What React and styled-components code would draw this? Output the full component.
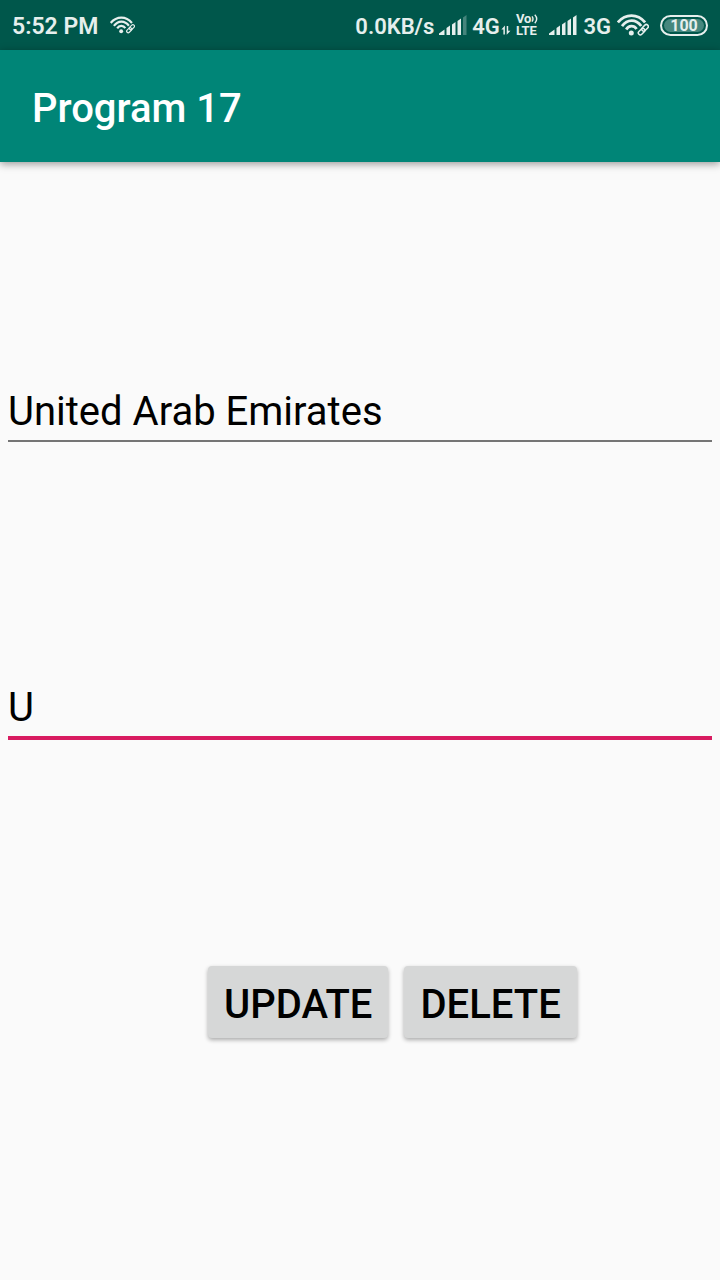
import React from "react";
import styled, { createGlobalStyle } from "styled-components";

const GlobalStyle = createGlobalStyle`
  *, *::before, *::after { box-sizing: border-box; }
  body {
    margin: 0;
    background: #fafafa;
    font-family: Roboto, "Liberation Sans", sans-serif;
  }
`;

const Screen = styled.div`
  min-height: 100vh;
  display: flex;
  flex-direction: column;
  background: #fafafa;
`;

const StatusBar = styled.div`
  display: flex;
  align-items: center;
  justify-content: space-between;
  height: 50px;
  padding: 0 12px;
  background: #00574b;
  color: #e6efed;
`;

const StatusGroup = styled.div`
  display: flex;
  align-items: center;
  gap: ${(p) => p.$gap}px;
`;

const StatusText = styled.span`
  font-size: ${(p) => p.$size || 22}px;
  line-height: 28px;
  font-weight: 600;
  white-space: nowrap;
  padding-top: 4px;
`;

const Network = styled.div`
  display: flex;
  align-items: center;
`;

const Icon = styled.svg`
  display: block;
  flex: none;
  fill: currentColor;
`;

const VolteBadge = styled.div`
  display: flex;
  flex-direction: column;
  font-size: 13px;
  line-height: 12px;
  font-weight: 700;
`;

const VolteTop = styled.span`
  display: flex;
  align-items: center;
`;

const Battery = styled.div`
  display: flex;
  width: 48px;
  height: 21px;
  padding: 2px;
  border: 2px solid #e6efed;
  border-radius: 11px;
`;

const BatteryLevel = styled.span`
  flex: 1;
  border-radius: 7px;
  background: #46877e;
  font-size: 16px;
  line-height: 14px;
  font-weight: 700;
  text-align: center;
`;

const AppBar = styled.header`
  display: flex;
  align-items: center;
  height: 112px;
  padding: 0 32px;
  background: #008577;
  box-shadow: 0 2px 8px rgba(0, 0, 0, 0.4);
`;

const Title = styled.h1`
  margin: 0;
  padding-top: 6px;
  color: #fff;
  font-size: 40px;
  line-height: 48px;
  font-weight: 500;
`;

const Form = styled.form`
  display: flex;
  flex-direction: column;
  padding: 210px 8px 0;
`;

const Field = styled.input`
  width: 100%;
  height: ${(p) => (p.$active ? 72 : 70)}px;
  margin: 0 0 226px;
  padding: 10px 0 0;
  border: 0;
  border-bottom: ${(p) => (p.$active ? "4px solid #d81b60" : "2px solid #757575")};
  border-radius: 0;
  outline: 0;
  background: transparent;
  color: #000;
  font: 400 40px/48px Roboto, "Liberation Sans", sans-serif;
`;

const Actions = styled.div`
  display: flex;
  gap: 16px;
  padding-left: 200px;
`;

const Button = styled.button`
  height: 72px;
  padding: 6px 16px 0;
  border: 0;
  border-radius: 4px;
  background: #d6d7d7;
  box-shadow: 0 2px 4px rgba(0, 0, 0, 0.32);
  color: #000;
  font: 500 40px/48px Roboto, "Liberation Sans", sans-serif;
  text-transform: uppercase;
`;

function WifiLinkIcon({ width, height }) {
  return (
    <Icon width={width} height={height} viewBox="0 0 32 22" aria-hidden="true">
      <g fill="none" stroke="currentColor" strokeWidth="2.8">
        <path d="M.9 8.4C8.5 -.6 20.5 -.6 28.1 8.4" />
        <path d="M5 12.2C10.4 4.9 18.8 4.9 24.2 12" />
        <path d="M9.2 15.4C11.8 11.2 17 11.2 19.6 15" />
      </g>
      <circle cx="14.3" cy="19" r="2.5" />
      <g fill="none" stroke="currentColor" strokeWidth="1.5">
        <rect x="-3.8" y="-2" width="7.6" height="4" rx="2" transform="translate(28 13.8) rotate(-45)" />
        <rect x="-3.8" y="-2" width="7.6" height="4" rx="2" transform="translate(24.6 17.6) rotate(-45)" />
      </g>
    </Icon>
  );
}

function SignalIcon({ lastOpacity = 1 }) {
  return (
    <Icon width="28" height="20" viewBox="0 0 28 20" aria-hidden="true">
      <path d="M0 20V18.6L5.5 14.6V20Z" />
      <path d="M7.5 20V13L11 10.5V20Z" />
      <path d="M13 20V9.5L16.5 7V20Z" />
      <path d="M18.5 20V6L22 3.5V20Z" />
      <path d="M24 20V2.4L27.5 0V20Z" opacity={lastOpacity} />
    </Icon>
  );
}

function DataArrowsIcon() {
  return (
    <Icon width="11" height="24" viewBox="0 0 11 24" aria-hidden="true">
      <path d="M3.4 21.4V16.6H1.4L4.9 12.6V21.4ZM6.7 13V21.8L10.4 17.8H8.2V13Z" />
    </Icon>
  );
}

function WavesIcon() {
  return (
    <Icon width="7" height="10" viewBox="0 0 7 10" aria-hidden="true">
      <path d="M1 2.4Q3 5 1 7.6M3.8 .8Q7.6 5 3.8 9.2" fill="none" stroke="currentColor" strokeWidth="1.4" />
    </Icon>
  );
}

export default function App() {
  return (
    <Screen>
      <GlobalStyle />
      <StatusBar>
        <StatusGroup $gap={12}>
          <StatusText $size={23}>5:52 PM</StatusText>
          <WifiLinkIcon width={25} height={18} />
        </StatusGroup>
        <StatusGroup $gap={11}>
          <StatusGroup $gap={5}>
            <StatusText>0.0KB/s</StatusText>
            <SignalIcon lastOpacity={0.3} />
            <Network>
              <StatusText>4G</StatusText>
              <DataArrowsIcon />
            </Network>
            <VolteBadge>
              <VolteTop>
                Vo
                <WavesIcon />
              </VolteTop>
              <span>LTE</span>
            </VolteBadge>
          </StatusGroup>
          <StatusGroup $gap={6}>
            <SignalIcon />
            <StatusText>3G</StatusText>
            <WifiLinkIcon width={32} height={22} />
          </StatusGroup>
          <Battery>
            <BatteryLevel>100</BatteryLevel>
          </Battery>
        </StatusGroup>
      </StatusBar>
      <AppBar>
        <Title>Program 17</Title>
      </AppBar>
      <Form onSubmit={(e) => e.preventDefault()}>
        <Field aria-label="Country name" defaultValue="United Arab Emirates" />
        <Field aria-label="Country code" $active defaultValue="U" />
        <Actions>
          <Button type="button">Update</Button>
          <Button type="button">Delete</Button>
        </Actions>
      </Form>
    </Screen>
  );
}
